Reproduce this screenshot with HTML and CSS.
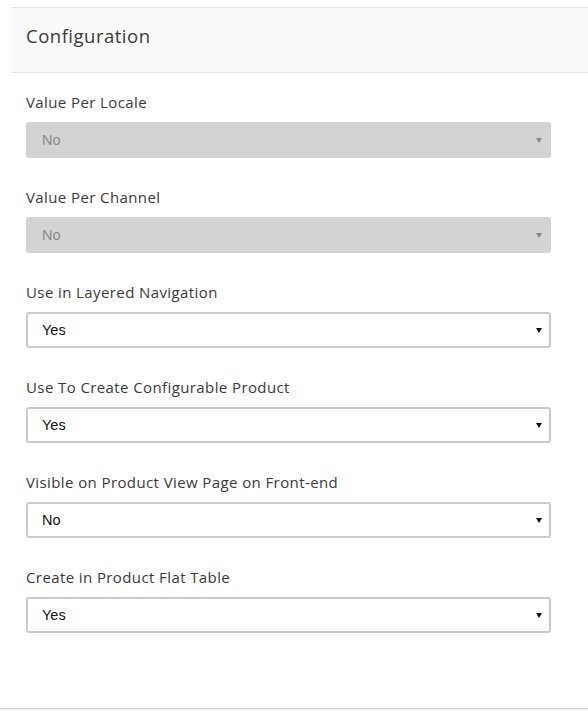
FILE: index.html
```html
<!DOCTYPE html>
<html>
<head>
<meta charset="utf-8">
<link rel="stylesheet" href="styles.css">
</head>
<body>
<div class="page">
  <div class="panel">
    <div class="panel-head">Configuration</div>
    <div class="panel-body">
      <div class="field">
        <label class="label">Value Per Locale</label>
        <div class="select disabled"><span>No</span></div>
      </div>
      <div class="field">
        <label class="label">Value Per Channel</label>
        <div class="select disabled"><span>No</span></div>
      </div>
      <div class="field">
        <label class="label">Use in Layered Navigation</label>
        <div class="select"><span>Yes</span></div>
      </div>
      <div class="field">
        <label class="label">Use To Create Configurable Product</label>
        <div class="select"><span>Yes</span></div>
      </div>
      <div class="field">
        <label class="label">Visible on Product View Page on Front-end</label>
        <div class="select"><span>No</span></div>
      </div>
      <div class="field">
        <label class="label">Create in Product Flat Table</label>
        <div class="select"><span>Yes</span></div>
      </div>
    </div>
  </div>
  <div class="footer-line"></div>
</div>
</body>
</html>
```
FILE: styles.css
```css
html, body {
  margin: 0;
  padding: 0;
  background: #fff;
}
.page {
  width: 588px;
  height: 711px;
  display: flex;
  flex-direction: column;
  overflow: hidden;
}
.panel {
  margin-top: 7px;
  margin-left: 11px;
  flex: 1;
}
.panel-head {
  height: 66px;
  box-sizing: border-box;
  border-top: 1px solid #e6e6e6;
  border-bottom: 1px solid #e6e6e6;
  background: #fafafa;
  padding-left: 15px;
  padding-bottom: 10px;
  display: flex;
  align-items: center;
  font-family: "Open Sans", sans-serif;
  font-size: 18.5px;
  letter-spacing: 0.5px;
  color: #3a3a3a;
}
.panel-body {
  padding: 18px 37px 0 15px;
  display: flex;
  flex-direction: column;
  gap: 28px;
}
.field {
  display: flex;
  flex-direction: column;
  gap: 9px;
}
.label {
  font-family: "Open Sans", sans-serif;
  font-size: 15px;
  letter-spacing: 0.4px;
  color: #3a3a3a;
  line-height: 22px;
}
.select {
  position: relative;
  height: 36px;
  box-sizing: border-box;
  border: 2px solid #cbcbcb;
  border-radius: 3px;
  background: #fff;
  padding-left: 14px;
  display: flex;
  align-items: center;
  font-family: "Liberation Sans", Arial, sans-serif;
  font-size: 14.5px;
  color: #111;
}
.select::after {
  content: "";
  position: absolute;
  right: 7px;
  top: 50%;
  margin-top: -2px;
  border-left: 3px solid transparent;
  border-right: 3px solid transparent;
  border-top: 5px solid #111;
}
.select.disabled {
  background: #d3d3d3;
  border-color: #d3d3d3;
  color: #8a8a8a;
}
.select.disabled::after {
  border-top-color: #888;
}
.footer-line {
  height: 1px;
  background: #cdcdcd;
  border-bottom: 2px solid #f4f4f4;
  flex: none;
}
```
